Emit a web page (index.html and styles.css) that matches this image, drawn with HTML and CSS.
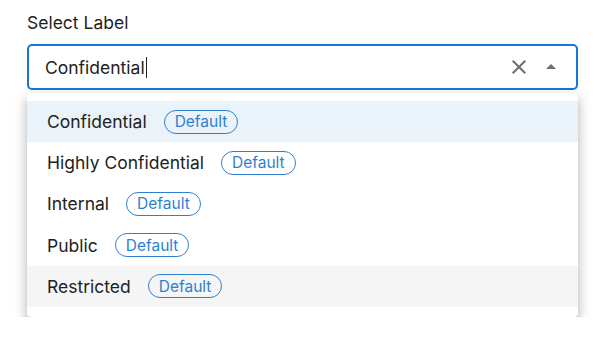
FILE: index.html
```html
<!DOCTYPE html>
<html>
<head>
<meta charset="utf-8">
<link rel="stylesheet" href="styles.css">
</head>
<body>
<div class="field">
  <label class="label">Select Label</label>
  <div class="input">
    <span class="value">Confidential</span><span class="caret"></span>
    <span class="spacer"></span>
    <svg class="clear" viewBox="0 0 24 24" width="24" height="24"><path d="M19 6.41 17.59 5 12 10.59 6.41 5 5 6.41 10.59 12 5 17.59 6.41 19 12 13.41 17.59 19 19 17.59 13.41 12z" fill="#6f6f6f"/></svg>
    <svg class="arrow" viewBox="0 0 24 24" width="24" height="24"><path d="m7 14 5-5 5 5z" fill="#6f6f6f"/></svg>
  </div>
  <ul class="menu">
    <li class="opt selected"><span>Confidential</span><span class="chip">Default</span></li>
    <li class="opt"><span>Highly Confidential</span><span class="chip">Default</span></li>
    <li class="opt"><span>Internal</span><span class="chip">Default</span></li>
    <li class="opt"><span>Public</span><span class="chip">Default</span></li>
    <li class="opt focused"><span>Restricted</span><span class="chip">Default</span></li>
  </ul>
</div>
</body>
</html>
```
FILE: styles.css
```css
* { box-sizing: border-box; }
body {
  margin: 0;
  background: #fff;
  font-family: Inter, "Open Sans", sans-serif;
  color: #222;
}
.field {
  width: 551px;
  margin: 11px 0 0 27px;
  display: flex;
  flex-direction: column;
}
.label {
  font-size: 17.5px;
  line-height: 23px;
  color: #1f1f1f;
  margin-bottom: 10px;
}
.input {
  height: 46px;
  border: 2px solid #1976d2;
  border-radius: 5px;
  display: flex;
  align-items: center;
  padding: 0 13px 0 16px;
}
.value {
  font-size: 17.5px;
  color: #222;
}
.caret {
  width: 1px;
  height: 21px;
  background: #222;
  margin-left: 1px;
}
.spacer { flex: 1; }
.clear { margin-right: 8px; }
.menu {
  list-style: none;
  margin: 3px 0 0;
  padding: 8px 0 10px;
  background: #fff;
  border-radius: 4px;
  box-shadow: 0 5px 5px -3px rgba(0,0,0,0.2), 0 8px 10px 1px rgba(0,0,0,0.14), 0 3px 14px 2px rgba(0,0,0,0.12);
}
.opt {
  height: 41.2px;
  display: flex;
  align-items: center;
  gap: 17px;
  padding: 0 20px;
  font-size: 17.5px;
  color: #222;
}
.opt.selected { background: #eaf2fa; }
.opt.focused { background: #f5f5f5; }
.chip {
  height: 24px;
  padding: 0 10px;
  border: 1px solid #2f7fd0;
  border-radius: 12px;
  color: #2f7fd0;
  font-size: 15.5px;
  display: flex;
  align-items: center;
}
```
